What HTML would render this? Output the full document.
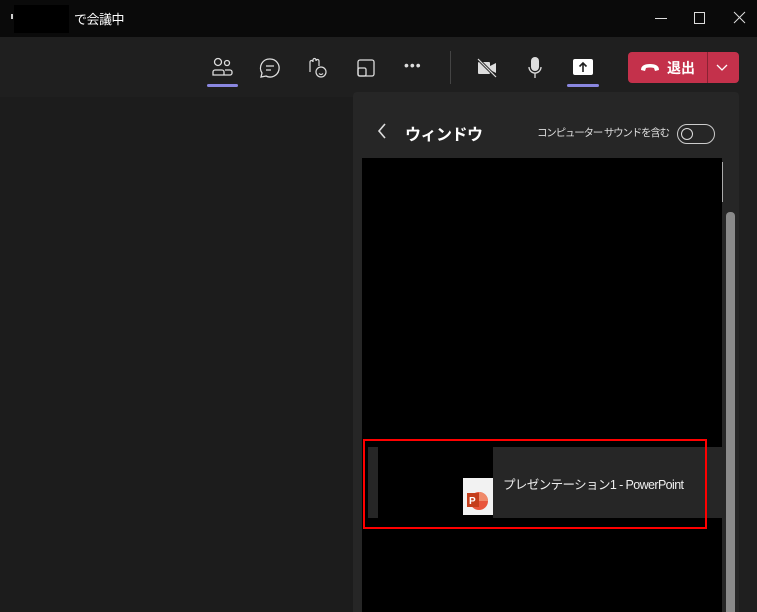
<!DOCTYPE html>
<html><head><meta charset="utf-8"><style>
*{margin:0;padding:0;box-sizing:border-box}
body{width:757px;height:612px;overflow:hidden;background:#1c1c1c;font-family:"Liberation Sans","Noto Sans CJK JP",sans-serif;color:#fff;position:relative}
.a{position:absolute;white-space:nowrap}
svg{position:absolute;overflow:visible}
</style></head><body>
<div class="a" style="left:0;top:0;width:757px;height:37px;background:#0a0a0a"></div>
<div class="a" style="left:11px;top:14px;width:2px;height:5px;background:#ccc"></div>
<div class="a" style="left:14px;top:5px;width:55px;height:28px;background:#000"></div>
<div class="a" style="left:74px;top:9px;font-size:13px;letter-spacing:-0.5px">で会議中</div>
<svg style="left:655px;top:18px" width="12" height="2"><line x1="0" y1="0.5" x2="12" y2="0.5" stroke="#ddd"/></svg>
<svg style="left:694px;top:12px" width="12" height="13"><rect x="0.5" y="0.5" width="10" height="11" fill="none" stroke="#ddd"/></svg>
<svg style="left:734px;top:12px" width="12" height="12"><path d="M0 0L11 11M11 0L0 11" stroke="#ddd"/></svg>
<div class="a" style="left:0;top:37px;width:757px;height:60px;background:#1f1f1f"></div>
<svg style="left:212px;top:58px" width="22" height="20" fill="none" stroke="#ddd" stroke-width="1.3"><circle cx="6" cy="4" r="3.5"/><circle cx="15" cy="5" r="2.5"/><path d="M1 17v-3a2 2 0 0 1 2-2h7a2 2 0 0 1 2 2v3zM13 12h5a2 2 0 0 1 2 2v1a2 2 0 0 1-2 2h-6"/></svg>
<div class="a" style="left:207px;top:84px;width:31px;height:3px;background:#8a87e0;border-radius:2px"></div>
<svg style="left:260px;top:58px" width="20" height="20" fill="none" stroke="#ddd" stroke-width="1.3"><path d="M10 1a9 9 0 1 1-4 17l-5 1 1-4A9 9 0 0 1 10 1z"/><path d="M6 8h8M6 12h5"/></svg>
<svg style="left:307px;top:58px" width="20" height="20" fill="none" stroke="#ddd" stroke-width="1.2"><path d="M3 14V4a1.5 1.5 0 0 1 3 0V2a1.5 1.5 0 0 1 3 0v1a1.5 1.5 0 0 1 3 0v5"/><circle cx="14" cy="14" r="5"/><path d="M12 15.5q2 2 4 0"/></svg>
<svg style="left:357px;top:59px" width="18" height="18" fill="none" stroke="#ddd" stroke-width="1.3"><rect x="1" y="1" width="16" height="16" rx="2"/><rect x="1" y="9" width="8" height="8" rx="1.5"/></svg>
<div class="a" style="left:404px;top:57px;font-size:14px;letter-spacing:1px;color:#ddd">•••</div>
<div class="a" style="left:450px;top:51px;width:1px;height:33px;background:#444"></div>
<svg style="left:477px;top:58px" width="20" height="20"><rect x="1" y="4" width="12" height="12" rx="1" fill="#ddd"/><path d="M13 8l6-3v10l-6-3z" fill="#ddd"/><line x1="1" y1="1" x2="19" y2="19" stroke="#1f1f1f" stroke-width="3"/><line x1="1" y1="1" x2="19" y2="19" stroke="#ddd" stroke-width="1.2"/></svg>
<svg style="left:528px;top:57px" width="14" height="22"><rect x="3" y="0" width="8" height="14" rx="4" fill="#ddd"/><path d="M1 10a6 6 0 0 0 12 0M7 16v5" fill="none" stroke="#ddd" stroke-width="1.3"/></svg>
<svg style="left:572px;top:58px" width="22" height="18"><rect x="1" y="1" width="20" height="16" rx="2" fill="#fff"/><path d="M11 14V5M7.5 8.5L11 5l3.5 3.5" stroke="#1f1f1f" stroke-width="1.6" fill="none"/></svg>
<div class="a" style="left:567px;top:84px;width:32px;height:3px;background:#8a87e0;border-radius:2px"></div>
<div class="a" style="left:628px;top:52px;width:111px;height:31px;background:#c4314b;border-radius:4px"></div>
<div class="a" style="left:707px;top:52px;width:1px;height:31px;background:#8a2233"></div>
<svg style="left:640px;top:62px" width="20" height="10"><path d="M1 8q0-6 9-6t9 6l-4 1-1-3q-4-1-8 0l-1 3z" fill="#fff"/></svg>
<div class="a" style="left:667px;top:58px;font-size:14px;font-weight:bold">退出</div>
<svg style="left:716px;top:64px" width="12" height="7"><path d="M1 1l5 5 5-5" stroke="#fff" fill="none" stroke-width="1.3"/></svg>
<div class="a" style="left:353px;top:92px;width:386px;height:520px;background:#262626;border-radius:4px 4px 0 0"></div>
<div class="a" style="left:739px;top:97px;width:18px;height:515px;background:#1f1f1f"></div>
<svg style="left:377px;top:123px" width="10" height="16"><path d="M8 1L2 8l6 7" stroke="#ddd" fill="none" stroke-width="1.6"/></svg>
<div class="a" style="left:405px;top:121px;font-size:16px;font-weight:bold;letter-spacing:-0.5px">ウィンドウ</div>
<div class="a" style="left:537px;top:125px;font-size:10.5px;color:#ddd;letter-spacing:-1.2px">コンピューター サウンドを含む</div>
<div class="a" style="left:677px;top:124px;width:38px;height:20px;border:1px solid #ccc;border-radius:10px"></div>
<div class="a" style="left:681px;top:128px;width:12px;height:12px;border:1.3px solid #ddd;border-radius:50%"></div>
<div class="a" style="left:362px;top:158px;width:360px;height:454px;background:#000"></div>
<div class="a" style="left:722px;top:162px;width:1px;height:40px;background:#aaa"></div>
<div class="a" style="left:726px;top:212px;width:9px;height:400px;background:#8a8a8a;border-radius:4px 4px 0 0"></div>
<div class="a" style="left:368px;top:447px;width:354px;height:71px;background:#262626"></div>
<div class="a" style="left:378px;top:447px;width:115px;height:74px;background:#000"></div>
<div class="a" style="left:463px;top:478px;width:30px;height:37px;background:#f2f2f2"></div>
<svg style="left:466px;top:490px" width="26" height="22"><circle cx="13" cy="11" r="9" fill="#e8553b"/><path d="M13 2a9 9 0 0 1 9 9h-9z" fill="#f08a6a"/><rect x="1" y="3" width="12" height="14" fill="#c43e1c"/><text x="3" y="14" font-size="10" font-weight="bold" fill="#fff" font-family="Liberation Sans">P</text></svg>
<div class="a" style="left:503px;top:474px;font-size:12.5px;color:#eee;letter-spacing:-0.6px">プレゼンテーション1 - PowerPoint</div>
<div class="a" style="left:363px;top:439px;width:344px;height:90px;border:2px solid #f00"></div>
</body></html>
